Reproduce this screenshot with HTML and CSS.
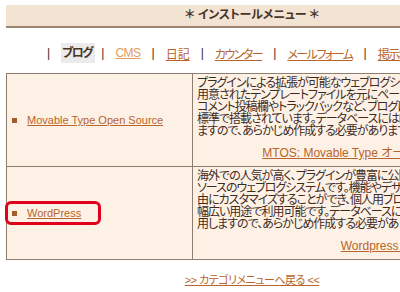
FILE: index.html
```html
<!DOCTYPE html>
<html lang="ja">
<head>
    <meta charset="UTF-8">
    <title>インストールメニュー - ブログ</title>
    <link rel="stylesheet" href="styles.css">
</head>
<body>
    <div class="page">
        <h2 class="menu-title">＊ インストールメニュー ＊</h2>

        <ul class="tabs">
            <li class="sep">|</li>
            <li class="current">ブログ</li>
            <li class="sep">|</li>
            <li><a href="#" class="dim">CMS</a></li>
            <li class="sep">|</li>
            <li><a href="#" class="kanji">日記</a></li>
            <li class="sep">|</li>
            <li><a href="#">カウンター</a></li>
            <li class="sep">|</li>
            <li><a href="#">メールフォーム</a></li>
            <li class="sep">|</li>
            <li><a href="#">掲示板</a></li>
            <li class="sep">|</li>
        </ul>

        <table class="soft-list">
            <colgroup>
                <col class="col-name">
                <col>
            </colgroup>
            <tr>
                <td class="name">
                    <span class="bullet"></span><a href="#">Movable Type Open Source</a>
                </td>
                <td class="desc">
                    <div class="desc-body">
                        <p>プラグインによる拡張が可能なウェブログシステムです。あらかじめ<br>
                        用意されたテンプレートファイルを元にページを生成します。<br>
                        コメント投稿欄やトラックバックなど、ブログに必要な機能が<br>
                        標準で搭載されています。データベースにはMySQLを使用し<br>
                        ますので、あらかじめ作成する必要があります。</p>
                        <a href="#" class="more">MTOS: Movable Type オープンソース（公式）</a>
                    </div>
                </td>
            </tr>
            <tr>
                <td class="name">
                    <span class="highlight"><span class="bullet"></span><a href="#">WordPress</a></span>
                </td>
                <td class="desc">
                    <div class="desc-body">
                        <p>海外での人気が高く、プラグインが豊富に公開されているオープン<br>
                        ソースのウェブログシステムです。機能やデザインを比較的自<br>
                        由にカスタマイズすることができ、個人用ブログから企業サイトまで<br>
                        幅広い用途で利用可能です。データベースにはMySQLを使<br>
                        用しますので、あらかじめ作成する必要があります。</p>
                        <a href="#" class="more">Wordpress 日本語公式サイト</a>
                    </div>
                </td>
            </tr>
        </table>

        <p class="back"><a href="#">&gt;&gt; カテゴリメニューへ戻る &lt;&lt;</a></p>
    </div>
</body>
</html>
```

FILE: styles.css
```css
html, body {
    margin: 0;
    padding: 0;
    overflow: hidden;
    background-color: #fff;
}
body {
    font-family: "Liberation Sans", "Noto Sans CJK JP", sans-serif;
    font-size: 12px;
    color: #3e2b1e;
    font-feature-settings: "palt";
}
a {
    color: #b8642a;
}
.page {
    width: 492px;
    margin-left: 6px;
    padding-top: 5px;
}
.menu-title {
    margin: 0;
    height: 21px;
    line-height: 21px;
    background-color: #f2e3d3;
    border-bottom: 2px solid #9c8473;
    text-align: center;
    font-size: 12px;
    font-weight: bold;
    letter-spacing: -0.2px;
    color: #4a3426;
}
.tabs {
    list-style: none;
    margin: 15px 0 10px;
    padding: 0 0 0 41px;
    height: 20px;
    display: flex;
    align-items: center;
    gap: 11px;
    white-space: nowrap;
    letter-spacing: -1.5px;
}
.tabs .sep {
    color: #3e2b1e;
    letter-spacing: 0;
}
.tabs .current {
    font-weight: bold;
    background-color: #ebebeb;
    color: #4a3426;
    line-height: 20px;
    padding: 0 3px 0 1px;
    margin-right: -5px;
}
.tabs a.dim {
    color: #e09a62;
    letter-spacing: -0.5px;
}
.tabs a.kanji {
    letter-spacing: 0;
}
.soft-list {
    width: 100%;
    table-layout: fixed;
    border-collapse: collapse;
    background-color: #fdf1e6;
}
.col-name {
    width: 186px;
}
.soft-list td {
    border: 1px solid #8f7e6e;
}
.soft-list .name {
    height: 92px;
    padding: 0 0 0 5px;
    vertical-align: middle;
    white-space: nowrap;
}
.soft-list .name a {
    font-size: 11px;
}
.bullet {
    display: inline-block;
    width: 5px;
    height: 5px;
    background-color: #a45c2a;
    margin-right: 10px;
    vertical-align: 1px;
}
.highlight {
    display: inline-block;
    margin-left: -7px;
    padding: 2px 17px 2px 4px;
    border: 3px solid #e1001c;
    border-radius: 6px;
}
.soft-list .desc {
    padding: 3px 4px 6px;
    vertical-align: top;
}
.desc-body {
    height: 83px;
    display: flex;
    flex-direction: column;
    white-space: nowrap;
}
.desc-body p {
    margin: 0;
    line-height: 12px;
    letter-spacing: -1px;
}
.desc-body .more {
    margin-top: auto;
    align-self: flex-end;
}
.back {
    margin: 11px 0 0;
    text-align: center;
    font-size: 11px;
    letter-spacing: -0.5px;
}
```
